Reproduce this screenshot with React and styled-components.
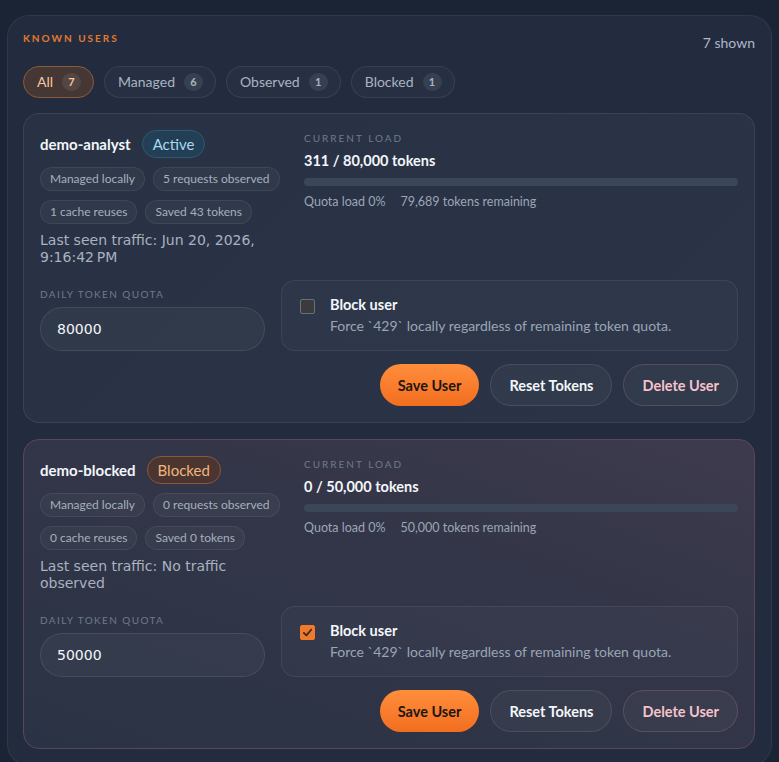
import React from 'react'
import styled, { createGlobalStyle, css } from 'styled-components'

const GlobalStyle = createGlobalStyle`
  html, body {
    margin: 0;
    background: #1b2435;
  }
  body {
    padding: 15px 7px 0;
    font-family: "Trebuchet MS", Lato, "Noto Sans", sans-serif;
    color: #e8edf4;
  }
  * {
    box-sizing: border-box;
  }
`

const Panel = styled.section`
  background: #222c3e;
  border: 1px solid rgba(255, 255, 255, 0.06);
  border-radius: 22px;
  padding: 15px 16px 16px 15px;
`

const PanelHeader = styled.div`
  display: flex;
  justify-content: space-between;
  align-items: flex-start;
`

const Eyebrow = styled.h2`
  margin: 0;
  font-size: 10px;
  font-weight: 700;
  letter-spacing: 2px;
  color: #e27a30;
  line-height: 14px;
`

const ShownCount = styled.span`
  font-size: 14px;
  line-height: 18px;
  color: #aeb8c6;
  margin-top: 3px;
`

const FilterRow = styled.div`
  display: flex;
  gap: 10px;
  margin-top: 14px;
  margin-bottom: 15px;
`

const FilterPill = styled.button`
  display: flex;
  align-items: center;
  gap: 9px;
  height: 32px;
  padding: 0 12px 0 13px;
  border-radius: 16px;
  font-family: inherit;
  font-size: 14px;
  line-height: 18px;
  color: #a9b4c3;
  background: rgba(255, 255, 255, 0.025);
  border: 1px solid rgba(255, 255, 255, 0.08);
  ${p => p.$active && css`
    color: #f5c99d;
    background: #453733;
    border-color: #8b5a3b;
  `}
`

const CountBadge = styled.span`
  min-width: 19px;
  height: 18px;
  border-radius: 9px;
  padding: 0 5px;
  display: flex;
  align-items: center;
  justify-content: center;
  font-size: 11px;
  font-weight: 700;
  background: rgba(255, 255, 255, 0.08);
`

const CardList = styled.div`
  display: flex;
  flex-direction: column;
  gap: 16px;
`

const Card = styled.article`
  border-radius: 16px;
  padding: 16px 16px 16px 16px;
  background: linear-gradient(135deg, #283244 0%, #2a3446 100%);
  border: 1px solid rgba(255, 255, 255, 0.08);
  ${p => p.$blocked && css`
    background: linear-gradient(200deg, #3e3a4d 0%, #333648 40%, #2a3345 100%);
    border-color: #5c4555;
  `}
`

const TopGrid = styled.div`
  display: grid;
  grid-template-columns: 244px 1fr;
  gap: 20px;
`

const Identity = styled.div`
  display: flex;
  flex-direction: column;
`

const NameRow = styled.div`
  display: flex;
  align-items: center;
  gap: 11px;
`

const UserName = styled.span`
  font-size: 15px;
  line-height: 18px;
  font-weight: 700;
  color: #f3f6fa;
`

const StatusPill = styled.span`
  height: 28px;
  padding: 0 10px;
  display: flex;
  align-items: center;
  border-radius: 14px;
  font-size: 15px;
  color: #a9d9ee;
  background: #233f55;
  border: 1px solid #2f5872;
  ${p => p.$blocked && css`
    color: #f2b57c;
    background: #4a3531;
    border-color: #8a5838;
  `}
`

const ChipWrap = styled.div`
  display: flex;
  flex-wrap: wrap;
  gap: 9px 8px;
  margin-top: 9px;
`

const Chip = styled.span`
  height: 24px;
  padding: 0 9px;
  display: flex;
  align-items: center;
  border-radius: 12px;
  font-size: 12px;
  line-height: 16px;
  color: #a5b0bf;
  background: rgba(255, 255, 255, 0.035);
  border: 1px solid rgba(255, 255, 255, 0.07);
`

const LastSeen = styled.p`
  margin: 8px 0 0;
  font-family: "DejaVu Sans", sans-serif;
  font-size: 14px;
  line-height: 17px;
  color: #a8b2c0;
`

const LoadBlock = styled.div`
  display: flex;
  flex-direction: column;
  padding-top: 1px;
`

const SmallLabel = styled.span`
  font-size: 10px;
  letter-spacing: 2px;
  color: #6f7a8c;
  line-height: 14px;
`

const LoadValue = styled.span`
  margin-top: 7px;
  font-size: 14.5px;
  line-height: 18px;
  font-weight: 700;
  color: #f3f6fa;
`

const Track = styled.div`
  margin-top: 8px;
  height: 8px;
  border-radius: 4px;
  background: #3b4759;
  overflow: hidden;
`

const Fill = styled.div`
  height: 100%;
  background: #f0782a;
`

const LoadMeta = styled.div`
  display: flex;
  gap: 15px;
  margin-top: 8px;
  font-size: 12.5px;
  line-height: 16px;
  color: #9ba6b6;
`

const BottomGrid = styled.div`
  display: grid;
  grid-template-columns: 225px 1fr;
  gap: 16px;
  align-items: end;
  margin-top: 14px;
`

const QuotaField = styled.label`
  display: flex;
  flex-direction: column;
  gap: 6px;
`

const QuotaLabel = styled(SmallLabel)`
  letter-spacing: 1.4px;
`

const QuotaInput = styled.input`
  height: 44px;
  border-radius: 22px;
  padding: 0 16px;
  font-family: "DejaVu Sans", sans-serif;
  font-size: 14px;
  color: #f3f6fa;
  background: rgba(255, 255, 255, 0.035);
  border: 1px solid rgba(255, 255, 255, 0.09);
  outline: none;
`

const BlockBox = styled.div`
  display: flex;
  gap: 15px;
  height: 71px;
  padding: 15px 18px 0;
  border-radius: 14px;
  background: rgba(255, 255, 255, 0.025);
  border: 1px solid rgba(255, 255, 255, 0.07);
`

const Check = styled.span`
  flex: none;
  width: 15px;
  height: 15px;
  margin-top: 3px;
  border-radius: 2px;
  background: #3b3b3e;
  border: 1px solid #6b7078;
  display: flex;
  align-items: center;
  justify-content: center;
  ${p => p.$checked && css`
    background: #f07a2c;
    border-color: #f07a2c;
  `}
`

const BlockText = styled.div`
  display: flex;
  flex-direction: column;
  gap: 3px;
`

const BlockTitle = styled.span`
  font-size: 14.5px;
  line-height: 18px;
  font-weight: 700;
  color: #f3f6fa;
`

const BlockDesc = styled.span`
  font-size: 14px;
  line-height: 17px;
  color: #9aa5b5;
`

const Actions = styled.div`
  display: flex;
  justify-content: flex-end;
  gap: 11px;
  margin-top: 13px;
`

const Button = styled.button`
  height: 42px;
  padding: 0 18px;
  border-radius: 21px;
  font-family: inherit;
  font-size: 14.5px;
  font-weight: 700;
  color: #f3f6fa;
  background: rgba(255, 255, 255, 0.035);
  border: 1px solid rgba(255, 255, 255, 0.1);
  ${p => p.$variant === 'primary' && css`
    color: #1c1712;
    border: none;
    background: linear-gradient(180deg, #ff8e3c 0%, #f26e1f 100%);
  `}
  ${p => p.$variant === 'danger' && css`
    color: #f6c2cb;
    border-color: rgba(240, 150, 170, 0.2);
  `}
`

const filters = [
  { label: 'All', count: 7, active: true },
  { label: 'Managed', count: 6 },
  { label: 'Observed', count: 1 },
  { label: 'Blocked', count: 1 },
]

const users = [
  {
    name: 'demo-analyst',
    blocked: false,
    requests: 5,
    reuses: 1,
    saved: 43,
    lastSeen: 'Jun 20, 2026, 9:16:42\u202FPM',
    used: 311,
    quota: 80000,
  },
  {
    name: 'demo-blocked',
    blocked: true,
    requests: 0,
    reuses: 0,
    saved: 0,
    lastSeen: 'No traffic observed',
    used: 0,
    quota: 50000,
  },
]

const fmt = n => n.toLocaleString('en-US')

const UserCard = ({ user }) => {
  const pct = Math.round((user.used / user.quota) * 100)
  return (
    <Card $blocked={user.blocked}>
      <TopGrid>
        <Identity>
          <NameRow>
            <UserName>{user.name}</UserName>
            <StatusPill $blocked={user.blocked}>{user.blocked ? 'Blocked' : 'Active'}</StatusPill>
          </NameRow>
          <ChipWrap>
            <Chip>Managed locally</Chip>
            <Chip>{user.requests} requests observed</Chip>
            <Chip>{user.reuses} cache reuses</Chip>
            <Chip>Saved {user.saved} tokens</Chip>
          </ChipWrap>
          <LastSeen>Last seen traffic: {user.lastSeen}</LastSeen>
        </Identity>
        <LoadBlock>
          <SmallLabel>CURRENT LOAD</SmallLabel>
          <LoadValue>{fmt(user.used)} / {fmt(user.quota)} tokens</LoadValue>
          <Track>
            <Fill style={{ width: `${pct}%` }} />
          </Track>
          <LoadMeta>
            <span>Quota load {pct}%</span>
            <span>{fmt(user.quota - user.used)} tokens remaining</span>
          </LoadMeta>
        </LoadBlock>
      </TopGrid>
      <BottomGrid>
        <QuotaField>
          <QuotaLabel>DAILY TOKEN QUOTA</QuotaLabel>
          <QuotaInput defaultValue={user.quota} />
        </QuotaField>
        <BlockBox>
          <Check $checked={user.blocked}>
            {user.blocked && (
              <svg width="11" height="11" viewBox="0 0 12 12">
                <path d="M2 6.5 L4.8 9.2 L10 3" fill="none" stroke="#3a2a20" strokeWidth="2" strokeLinecap="round" strokeLinejoin="round" />
              </svg>
            )}
          </Check>
          <BlockText>
            <BlockTitle>Block user</BlockTitle>
            <BlockDesc>Force `429` locally regardless of remaining token quota.</BlockDesc>
          </BlockText>
        </BlockBox>
      </BottomGrid>
      <Actions>
        <Button $variant="primary">Save User</Button>
        <Button>Reset Tokens</Button>
        <Button $variant="danger">Delete User</Button>
      </Actions>
    </Card>
  )
}

export default function App() {
  return (
    <>
      <GlobalStyle />
      <Panel>
        <PanelHeader>
          <Eyebrow>KNOWN USERS</Eyebrow>
          <ShownCount>7 shown</ShownCount>
        </PanelHeader>
        <FilterRow>
          {filters.map(f => (
            <FilterPill key={f.label} $active={f.active}>
              {f.label}
              <CountBadge>{f.count}</CountBadge>
            </FilterPill>
          ))}
        </FilterRow>
        <CardList>
          {users.map(u => (
            <UserCard key={u.name} user={u} />
          ))}
        </CardList>
      </Panel>
    </>
  )
}
